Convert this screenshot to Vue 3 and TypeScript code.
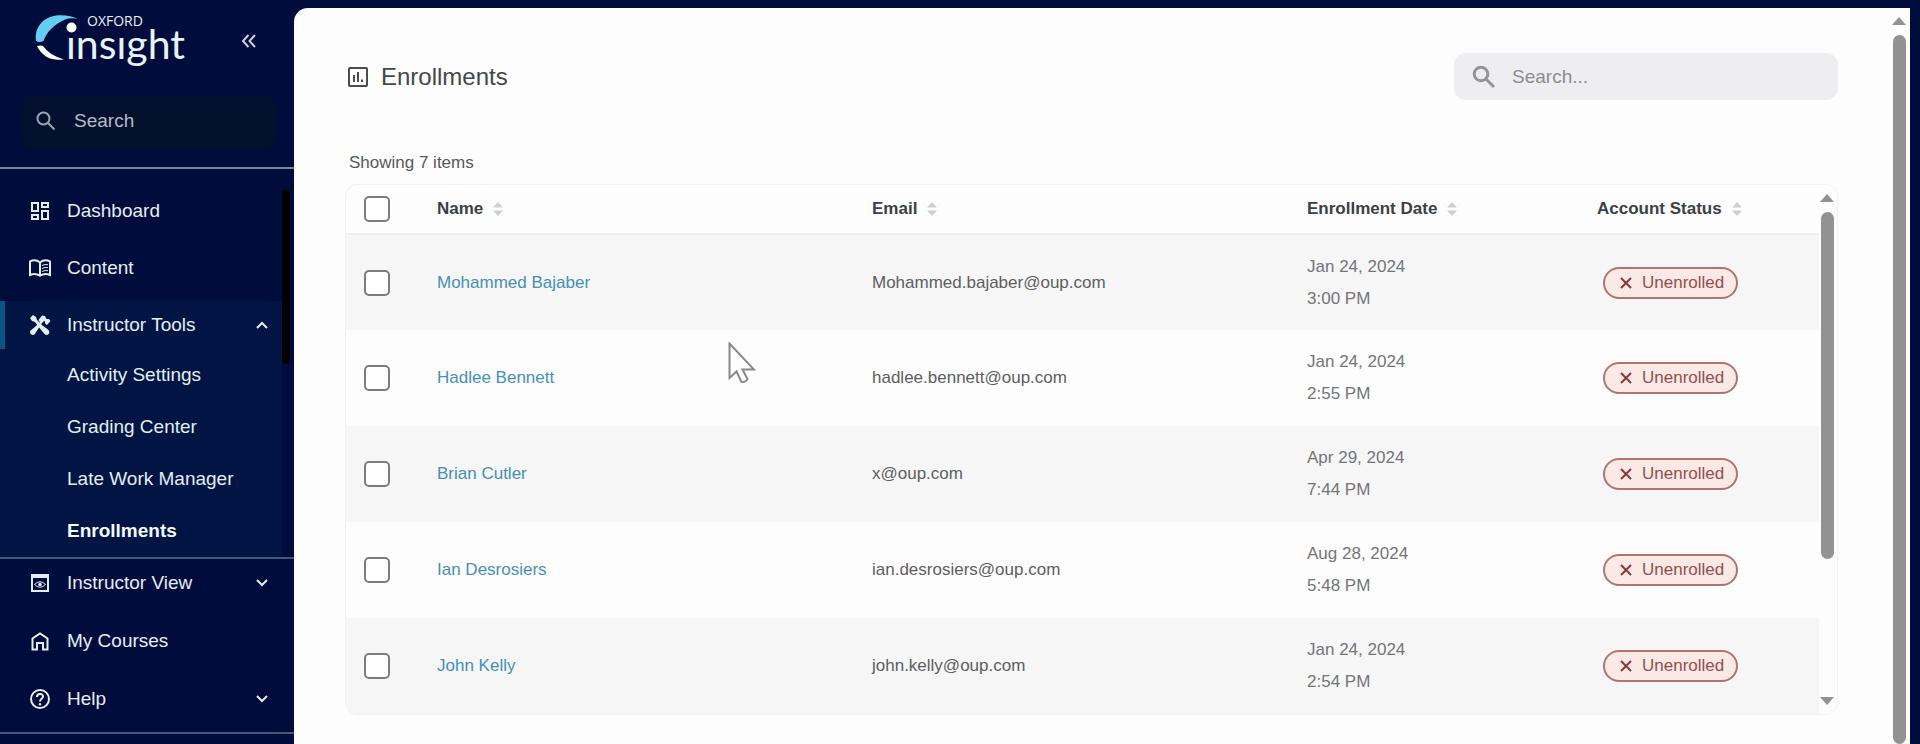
<script setup lang="ts">
import { ref } from 'vue'

interface Enrollment {
  name: string
  email: string
  date: string
  time: string
}

const toolLinks = ['Activity Settings', 'Grading Center', 'Late Work Manager', 'Enrollments']
const columns = [
  { key: 'name', label: 'Name' },
  { key: 'email', label: 'Email' },
  { key: 'date', label: 'Enrollment Date' },
  { key: 'status', label: 'Account Status' },
]
const rows: Enrollment[] = [
  { name: 'Mohammed Bajaber', email: 'Mohammed.bajaber@oup.com', date: 'Jan 24, 2024', time: '3:00 PM' },
  { name: 'Hadlee Bennett', email: 'hadlee.bennett@oup.com', date: 'Jan 24, 2024', time: '2:55 PM' },
  { name: 'Brian Cutler', email: 'x@oup.com', date: 'Apr 29, 2024', time: '7:44 PM' },
  { name: 'Ian Desrosiers', email: 'ian.desrosiers@oup.com', date: 'Aug 28, 2024', time: '5:48 PM' },
  { name: 'John Kelly', email: 'john.kelly@oup.com', date: 'Jan 24, 2024', time: '2:54 PM' },
]
const selected = ref<string[]>([])
const menuQuery = ref('')
const tableQuery = ref('')

function toggleAll(event: Event) {
  selected.value = (event.target as HTMLInputElement).checked ? rows.map((r) => r.name) : []
}
</script>

<template>
  <div class="app">
    <aside class="sidebar">
      <header class="brand">
        <svg class="logo" viewBox="34 12 154 60" role="img" aria-label="Oxford Insight">
          <path d="M36 41C34 25 46 15 61 15.300Q71 15.500 78 19Q71 17.500 65 19.500C54 24 46 33 43.500 41Q39 43 36 41Z" fill="#63cdf3" />
          <path d="M37 46Q41 45 43 46Q49 55 64 59.500Q45 62 37 46Z" fill="#fff" />
          <circle cx="71.500" cy="27.500" r="5" fill="#fff" />
          <text class="logo-small" x="87" y="26">OXFORD</text>
          <text class="logo-big" x="66" y="59">ınsıght</text>
        </svg>
        <button class="collapse" type="button" aria-label="Collapse menu">
          <svg width="16" height="16" viewBox="0 0 16 16"><path d="M7.500 2 2 8l5.500 6M14 2 8.500 8l5.500 6" /></svg>
        </button>
      </header>

      <label class="menu-search">
        <svg width="20" height="20" viewBox="0 0 20 20"><circle cx="7.500" cy="7.500" r="6" /><path d="m12 12 6.500 6.500" /></svg>
        <input v-model="menuQuery" type="text" placeholder="Search" aria-label="Search menu" />
      </label>

      <div class="nav-scroll">
        <nav class="nav">
          <a class="item" href="#">
            <svg class="icon" viewBox="0 0 24 24">
              <path class="fill" d="M19 5v2h-4V5h4M9 5v6H5V5h4m10 8v6h-4v-6h4M9 17v2H5v-2h4M21 3h-8v6h8V3zM11 3H3v10h8V3zm10 8h-8v10h8V11zm-10 4H3v6h8v-6z" />
            </svg>
            <span>Dashboard</span>
          </a>
          <a class="item" href="#">
            <svg class="icon" viewBox="0 0 24 24">
              <path d="M12 6.500C9 4 5 4 2 5.500V19c3-1.300 7-1.300 10 .8 3-2.100 7-2.100 10-.8V5.500C19 4 15 4 12 6.500Zm0 0v13" />
              <path class="thin" d="M14 9.500q3-1.500 6-.8M14 12.500q3-1.500 6-.8M14 15.500q3-1.500 6-.8" />
            </svg>
            <span>Content</span>
          </a>
          <div class="group">
            <a class="item open" href="#">
              <svg class="icon" viewBox="0 0 24 24">
                <path class="fill" d="M2 5 5 2l3 2 1 3 3.500 3.500 2 2 5.500 4c3.500 3-.5 7.500-3.500 4.500L11.500 15 7 9 4 8Z" />
                <path class="fill" d="M2.700 17.500 12 9.500 10.500 7 14 2.500l3 .5 1.500 3h2.500l1.500 2-3.500 4-2-1.500V8.500L16 8l-2 2-7.500 11.500c-3 1.500-5.800-1.500-3.800-4Z" />
              </svg>
              <span>Instructor Tools</span>
              <svg class="chevron" viewBox="0 0 12 8"><path d="M1 7 6 2l5 5" /></svg>
            </a>
            <a
              v-for="link in toolLinks"
              :key="link"
              class="sub"
              :class="{ current: link === 'Enrollments' }"
              href="#"
            >{{ link }}</a>
          </div>
        </nav>
        <div class="nav-track"><div class="nav-thumb"></div></div>
      </div>

      <nav class="nav lower">
        <a class="item" href="#">
          <svg class="icon" viewBox="0 0 24 24">
            <path d="M4 4h16v16H4Z" /><path class="fill" d="M3 3h18v4H3Z" />
            <path class="thin" d="M6.500 13.500q5.500-5.500 11 0-5.500 5.500-11 0Z" /><circle class="fill" cx="12" cy="13.500" r="1.800" />
          </svg>
          <span>Instructor View</span>
          <svg class="chevron" viewBox="0 0 12 8"><path d="m1 1 5 5 5-5" /></svg>
        </a>
        <a class="item" href="#">
          <svg class="icon" viewBox="0 0 24 24"><path d="M4.500 20.500V9.500L12 4.500l7.500 5v11h-4.500V14H9v6.500Z" /></svg>
          <span>My Courses</span>
        </a>
        <a class="item" href="#">
          <svg class="icon" viewBox="0 0 24 24">
            <circle cx="12" cy="12" r="9" />
            <path d="M9 10c0-4 6-4 6-.5 0 2.200-3 2.500-3 5" /><circle class="fill" cx="12" cy="17.300" r="1.200" />
          </svg>
          <span>Help</span>
          <svg class="chevron" viewBox="0 0 12 8"><path d="m1 1 5 5 5-5" /></svg>
        </a>
      </nav>
    </aside>

    <div class="panel">
      <main class="content">
        <header class="page-head">
          <svg class="title-icon" viewBox="0 0 20 20">
            <rect x="1" y="1" width="18" height="18" rx="1" />
            <path d="M6 8v7M10 5v10M14 12.500v2.500" />
          </svg>
          <h1>Enrollments</h1>
          <label class="table-search">
            <svg width="24" height="24" viewBox="0 0 24 24"><circle cx="9" cy="9" r="6.800" /><path d="m14 14 8 8" /></svg>
            <input v-model="tableQuery" type="text" placeholder="Search..." aria-label="Search enrollments" />
          </label>
        </header>

        <p class="count">Showing 7 items</p>

        <section class="table-box">
          <table>
            <colgroup>
              <col class="c-check" /><col class="c-wide" /><col class="c-wide" /><col class="c-date" /><col />
            </colgroup>
            <thead>
              <tr>
                <th class="check"><input type="checkbox" aria-label="Select all" @change="toggleAll" /></th>
                <th v-for="col in columns" :key="col.key" scope="col">
                  <button type="button">
                    {{ col.label }}
                    <svg width="10" height="16" viewBox="0 0 10 16"><path d="M0 6.500 5 1l5 5.500ZM0 9.500 5 15l5-5.500Z" /></svg>
                  </button>
                </th>
              </tr>
            </thead>
            <tbody>
              <tr v-for="row in rows" :key="row.name">
                <td class="check">
                  <input v-model="selected" type="checkbox" :value="row.name" :aria-label="'Select ' + row.name" />
                </td>
                <td><a href="#">{{ row.name }}</a></td>
                <td class="email">{{ row.email }}</td>
                <td class="when">{{ row.date }}<br />{{ row.time }}</td>
                <td class="state">
                  <span class="badge">
                    <svg width="12" height="12" viewBox="0 0 12 12"><path d="m1 1 10 10M11 1 1 11" /></svg>
                    Unenrolled
                  </span>
                </td>
              </tr>
            </tbody>
          </table>
          <div class="scrollbar inner">
            <i class="arrow up"></i>
            <div class="track"><div class="thumb partial"></div></div>
            <i class="arrow down"></i>
          </div>
        </section>
      </main>
      <div class="scrollbar outer">
        <i class="arrow up"></i>
        <div class="track"><div class="thumb"></div></div>
      </div>
    </div>

    <svg class="pointer" viewBox="0 0 28 42">
      <path d="M1.500 1.500v34.500l7-6.500 5 10.500q5 0 6-3l-5-9.500h11.500Z" />
    </svg>
  </div>
</template>

<style>
html,
body {
  margin: 0;
  background: #000c3b;
}
</style>

<style scoped>
* {
  box-sizing: border-box;
}

.app {
  display: flex;
  position: relative;
  height: 100vh;
  overflow: hidden;
  background: #000c3b;
  font-family: "Liberation Sans", Arial, sans-serif;
  color: #45474a;
}

a {
  text-decoration: none;
}

button {
  border: 0;
  padding: 0;
  background: none;
  font: inherit;
  color: inherit;
}

input[type="text"] {
  flex: 1;
  min-width: 0;
  border: 0;
  padding: 0;
  outline: 0;
  background: none;
  font: inherit;
  color: inherit;
}

input::placeholder {
  color: inherit;
  opacity: 1;
}

svg {
  flex: none;
  fill: none;
}

/* Sidebar */
.sidebar {
  display: flex;
  flex: none;
  flex-direction: column;
  width: 294px;
  color: #e3eef4;
  font-size: 19px;
}

.brand {
  display: flex;
  justify-content: space-between;
  padding: 12px 37px 0 34px;
  height: 96px;
}

.logo {
  width: 154px;
  height: 60px;
}

.logo text {
  fill: #e6f3f8;
}

.logo .logo-small {
  font: 14px "Open Sans", sans-serif;
}

.logo .logo-big {
  font: 41px Lato, sans-serif;
}

.collapse {
  margin-top: 21px;
  height: 16px;
}

.collapse svg {
  display: block;
  stroke: #c3d2de;
  stroke-width: 2;
}

.menu-search {
  display: flex;
  align-items: center;
  gap: 18px;
  margin: 0 17px 18px 21px;
  padding: 0 15px 4px;
  height: 53px;
  border-radius: 12px;
  background: #02102d;
  color: #b3bcc9;
}

.menu-search svg {
  stroke: #98a4b3;
  stroke-width: 2;
}

.nav-scroll {
  display: flex;
  border-top: 2px solid #7586a0;
  border-bottom: 2px solid #45577c;
}

.nav {
  display: flex;
  flex: 1;
  flex-direction: column;
  gap: 9px;
}

.nav-scroll .nav {
  padding-top: 18px;
}

.nav-track {
  flex: none;
  width: 12px;
  padding-top: 21px;
}

.nav-thumb {
  width: 8px;
  height: 174px;
  border-radius: 4px;
  background: #000005;
}

.item {
  display: flex;
  align-items: center;
  gap: 15px;
  height: 48px;
  padding: 0 14px 0 28px;
  color: inherit;
}

.icon {
  width: 24px;
  height: 24px;
  stroke: currentColor;
  stroke-width: 2;
}

.icon .fill {
  fill: currentColor;
  stroke: none;
}

.icon .thin {
  stroke-width: 1;
}

.chevron {
  width: 12px;
  height: 8px;
  margin-left: auto;
  stroke: currentColor;
  stroke-width: 2;
}

.group {
  background: #001543;
}

.open {
  border-left: 5px solid #085686;
  padding-left: 23px;
}

.sub {
  display: block;
  padding-left: 67px;
  line-height: 52px;
  color: inherit;
}

.current {
  font-weight: bold;
  color: #f4fafc;
}

.lower {
  flex: none;
  gap: 10px;
  padding-bottom: 9px;
  border-bottom: 2px solid #45577c;
}

.lower .item {
  padding-right: 26px;
}

/* Content panel */
.panel {
  display: flex;
  flex: 1;
  min-width: 0;
  margin: 8px 10px 0 0;
  border-top-left-radius: 14px;
  background: #fdfdfd;
}

.content {
  flex: 1;
  min-width: 0;
  padding: 45px 54px 0 51px;
}

.page-head {
  display: flex;
  align-items: center;
  height: 47px;
  padding-left: 3px;
}

.title-icon {
  width: 20px;
  height: 20px;
  stroke: #4b4d50;
  stroke-width: 2;
}

h1 {
  flex: 1;
  margin: 0 0 0 13px;
  font-size: 24px;
  font-weight: normal;
}

.table-search {
  display: flex;
  align-items: center;
  gap: 16px;
  width: 384px;
  height: 47px;
  padding: 0 18px;
  border-radius: 12px;
  background: #eeeef0;
  color: #8c8c8e;
  font-size: 19px;
}

.table-search svg {
  stroke: #949496;
  stroke-width: 3;
}

.count {
  margin: 52px 0 10px 4px;
  font-size: 17px;
  line-height: 22px;
  color: #58595b;
}

.table-box {
  display: flex;
  overflow: hidden;
  border: 1px solid #f2f2f2;
  border-radius: 12px;
}

table {
  flex: 1;
  min-width: 0;
  table-layout: fixed;
  border-collapse: collapse;
  font-size: 17px;
}

.c-check {
  width: 91px;
}

.c-wide {
  width: 435px;
}

.c-date {
  width: 290px;
}

th,
td {
  padding: 0;
  text-align: left;
}

th {
  height: 49px;
  border-bottom: 2px solid #f0f0f0;
  color: #3c3f45;
}

th button {
  display: inline-flex;
  align-items: center;
  gap: 10px;
  font-weight: bold;
}

th svg {
  fill: #cfcfcf;
}

td {
  height: 96px;
  line-height: 32px;
}

tbody tr:nth-child(odd) {
  background: #f6f6f6;
}

td a {
  color: #4690b6;
}

.email {
  color: #5d5e60;
}

.when {
  color: #747577;
}

.check {
  padding-left: 18px;
}

.check input {
  display: block;
  width: 26px;
  height: 26px;
  margin: 0;
  appearance: none;
  border: 2px solid #7b7c7e;
  border-radius: 5px;
  background: #fff;
}

.check input:checked {
  background: #4690b6;
}

.state {
  padding-left: 6px;
}

.badge {
  display: inline-flex;
  align-items: center;
  gap: 10px;
  height: 32px;
  padding: 0 12px 0 15px;
  border: 2px solid #b07573;
  border-radius: 16px;
  background: #fbe9e5;
  color: #944e50;
  vertical-align: middle;
}

.badge svg {
  stroke: #85383b;
  stroke-width: 2;
}

/* Scrollbars */
.scrollbar {
  display: flex;
  flex: none;
  flex-direction: column;
  align-items: center;
  gap: 10px;
}

.inner {
  width: 18px;
  padding: 9px 2px 9px 0;
}

.outer {
  width: 18px;
  padding: 9px 4px 0 0;
}

.track {
  flex: 1;
  width: 13px;
}

.thumb {
  height: 100%;
  border-radius: 7px;
  background: #929292;
}

.partial {
  height: 73%;
}

.arrow {
  border: 7px solid transparent;
}

.up {
  border-top: 0;
  border-bottom: 8px solid #929292;
}

.down {
  border-bottom: 0;
  border-top: 8px solid #929292;
}

/* Mouse pointer floats over the page */
.pointer {
  position: absolute;
  left: 728px;
  top: 342px;
  width: 28px;
  height: 42px;
  fill: #fdfdfd;
  stroke: #88898b;
  stroke-width: 2;
}
</style>
